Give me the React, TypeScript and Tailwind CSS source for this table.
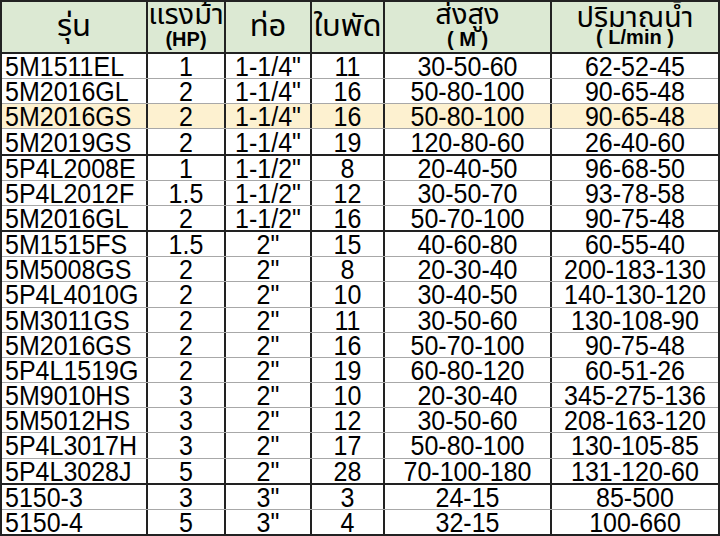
import React from 'react';

// ตารางรุ่นปั๊ม
const rows: [string, string, string, string, string, string][] = [
  ['5M1511EL', '1', '1-1/4"', '11', '30-50-60', '62-52-45'],
  ['5M2016GL', '2', '1-1/4"', '16', '50-80-100', '90-65-48'],
  ['5M2016GS', '2', '1-1/4"', '16', '50-80-100', '90-65-48'],
  ['5M2019GS', '2', '1-1/4"', '19', '120-80-60', '26-40-60'],
  ['5P4L2008E', '1', '1-1/2"', '8', '20-40-50', '96-68-50'],
  ['5P4L2012F', '1.5', '1-1/2"', '12', '30-50-70', '93-78-58'],
  ['5M2016GL', '2', '1-1/2"', '16', '50-70-100', '90-75-48'],
  ['5M1515FS', '1.5', '2"', '15', '40-60-80', '60-55-40'],
  ['5M5008GS', '2', '2"', '8', '20-30-40', '200-183-130'],
  ['5P4L4010G', '2', '2"', '10', '30-40-50', '140-130-120'],
  ['5M3011GS', '2', '2"', '11', '30-50-60', '130-108-90'],
  ['5M2016GS', '2', '2"', '16', '50-70-100', '90-75-48'],
  ['5P4L1519G', '2', '2"', '19', '60-80-120', '60-51-26'],
  ['5M9010HS', '3', '2"', '10', '20-30-40', '345-275-136'],
  ['5M5012HS', '3', '2"', '12', '30-50-60', '208-163-120'],
  ['5P4L3017H', '3', '2"', '17', '50-80-100', '130-105-85'],
  ['5P4L3028J', '5', '2"', '28', '70-100-180', '131-120-60'],
  ['5150-3', '3', '3"', '3', '24-15', '85-500'],
  ['5150-4', '5', '3"', '4', '32-15', '100-660'],
];

// แถวที่มีเส้นคั่นกลุ่มหนา (index ของแถวก่อนเส้น)
const groupEnds = [3, 6, 16];

const thai = { fontFamily: '"Noto Sans Thai", "Noto Sans", "Liberation Sans", sans-serif' };
const cols = 'grid grid-cols-[146px_78px_86px_73px_167px_1fr] divide-x-2 divide-[#222]';

function Head({ title, sub, subClass = '' }: { title: string; sub?: string; subClass?: string }) {
  return (
    <div className="flex flex-col items-center justify-center">
      <div className={`${sub ? 'text-[29px] leading-[28px] -mt-1' : 'text-[31px] leading-[34px]'}`} style={thai}>
        {title}
      </div>
      {sub && <div className={`text-[20px] font-bold leading-[20px] whitespace-pre ${subClass}`}>{sub}</div>}
    </div>
  );
}

export default function App() {
  return (
    <div
      className="w-[720px] h-[536px] bg-white border-2 border-[#222] flex flex-col text-black overflow-hidden"
      style={{ fontFamily: '"Liberation Sans", Arial, sans-serif' }}
    >
      {/* หัวตาราง */}
      <div className={`${cols} h-[52px] shrink-0 bg-[#dce9d3] border-b-2 border-[#222]`}>
        <Head title="รุ่น" />
        <Head title="แรงม้า" sub="(HP)" />
        <Head title="ท่อ" />
        <Head title="ใบพัด" />
        <Head title="ส่งสูง" sub="( M )" />
        <Head title="ปริมาณน้ำ" sub="( L/min )" subClass="-mt-[5px]" />
      </div>

      {rows.map((r, i) => (
        <div
          key={i}
          className={`${cols} flex-1 min-h-0 ${i === 2 ? 'bg-[#fdf1d0]' : 'bg-white'} ${
            i === rows.length - 1 ? '' : groupEnds.includes(i) ? 'border-b-2 border-[#222]' : 'border-b border-[#a8a8a8]'
          }`}
        >
          {r.map((c, j) => (
            <div
              key={j}
              className={`flex items-center whitespace-nowrap text-[25px] leading-[22px] ${
                j === 0 ? 'justify-start pl-[3px]' : 'justify-center'
              }`}
            >
              <span className="inline-block scale-y-110">{c}</span>
            </div>
          ))}
        </div>
      ))}
    </div>
  );
}
